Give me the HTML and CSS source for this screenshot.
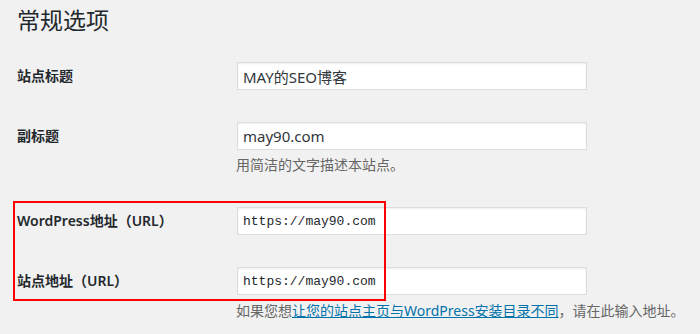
FILE: index.html
```html
<!DOCTYPE html>
<html lang="zh-CN">

<head>
    <meta charset="UTF-8" />
    <meta name="viewport" content="width=device-width, initial-scale=1.0" />
    <title>常规选项</title>
    <link rel="stylesheet" href="styles.css">
</head>

<body>
    <div class="wrap">
        <h1 class="page_title">常规选项</h1>

        <div class="form_table">
            <div class="row row_first">
                <label class="label" for="blogname">站点标题</label>
                <div class="field">
                    <input type="text" id="blogname" class="text_input" value="MAY的SEO博客">
                </div>
            </div>

            <div class="row">
                <label class="label" for="blogdescription">副标题</label>
                <div class="field">
                    <input type="text" id="blogdescription" class="text_input" value="may90.com">
                    <p class="description">用简洁的文字描述本站点。</p>
                </div>
            </div>

            <div class="marked">
                <div class="row">
                    <label class="label" for="siteurl">WordPress地址（URL）</label>
                    <div class="field">
                        <input type="text" id="siteurl" class="text_input code" value="https://may90.com">
                    </div>
                </div>

                <div class="row">
                    <label class="label" for="home">站点地址（URL）</label>
                    <div class="field">
                        <input type="text" id="home" class="text_input code" value="https://may90.com">
                    </div>
                </div>
            </div>
            <p class="description description_home">如果您想<a href="#">让您的站点主页与WordPress安装目录不同</a>，请在此输入地址。</p>
        </div>
    </div>
</body>

</html>
```

FILE: styles.css
```css
* {
    box-sizing: border-box;
}

body {
    margin: 0;
    padding: 0;
    background-color: #f1f1f1;
    color: #23282d;
    font-family: "Noto Sans", "Noto Sans CJK SC", sans-serif;
    font-size: 14px;
    overflow: hidden;
}

.wrap {
    padding: 0 0 0 17px;
}

.page_title {
    margin: 0;
    padding-top: 6px;
    font-size: 23px;
    font-weight: 400;
    line-height: 29px;
}

.form_table {
    display: flex;
    flex-direction: column;
}

.row {
    display: flex;
    align-items: flex-start;
}

.row_first {
    margin-top: 27px;
}

.row + .row,
.marked {
    margin-top: 32px;
}

.marked .row + .row {
    margin-top: 32px;
}

.label {
    width: 220px;
    flex-shrink: 0;
    padding-top: 4px;
    font-weight: 600;
    line-height: 20px;
}

.field {
    display: flex;
    flex-direction: column;
}

.text_input {
    width: 350px;
    height: 28px;
    margin: 0;
    padding: 0 5px;
    border: 1px solid #ddd;
    background-color: #fff;
    color: #32373c;
    font-family: inherit;
    font-size: 15px;
    box-shadow: inset 0 1px 2px rgba(0, 0, 0, 0.07);
    outline: 0;
}

.code {
    font-family: "Liberation Mono", "DejaVu Sans Mono", monospace;
    font-size: 13px;
    color: #23282d;
}

.description {
    margin: 5px 0 0 -1px;
    color: #666;
    font-size: 14px;
    line-height: 20px;
}

.description_home {
    margin: 6px 0 0 219px;
}

.description a {
    color: #0073aa;
}

/* red annotation box */

.marked {
    position: relative;
}

.marked::before {
    content: "";
    position: absolute;
    left: -4px;
    top: -6px;
    width: 369px;
    bottom: -6px;
    border: 2px solid #f00;
    pointer-events: none;
}
```
